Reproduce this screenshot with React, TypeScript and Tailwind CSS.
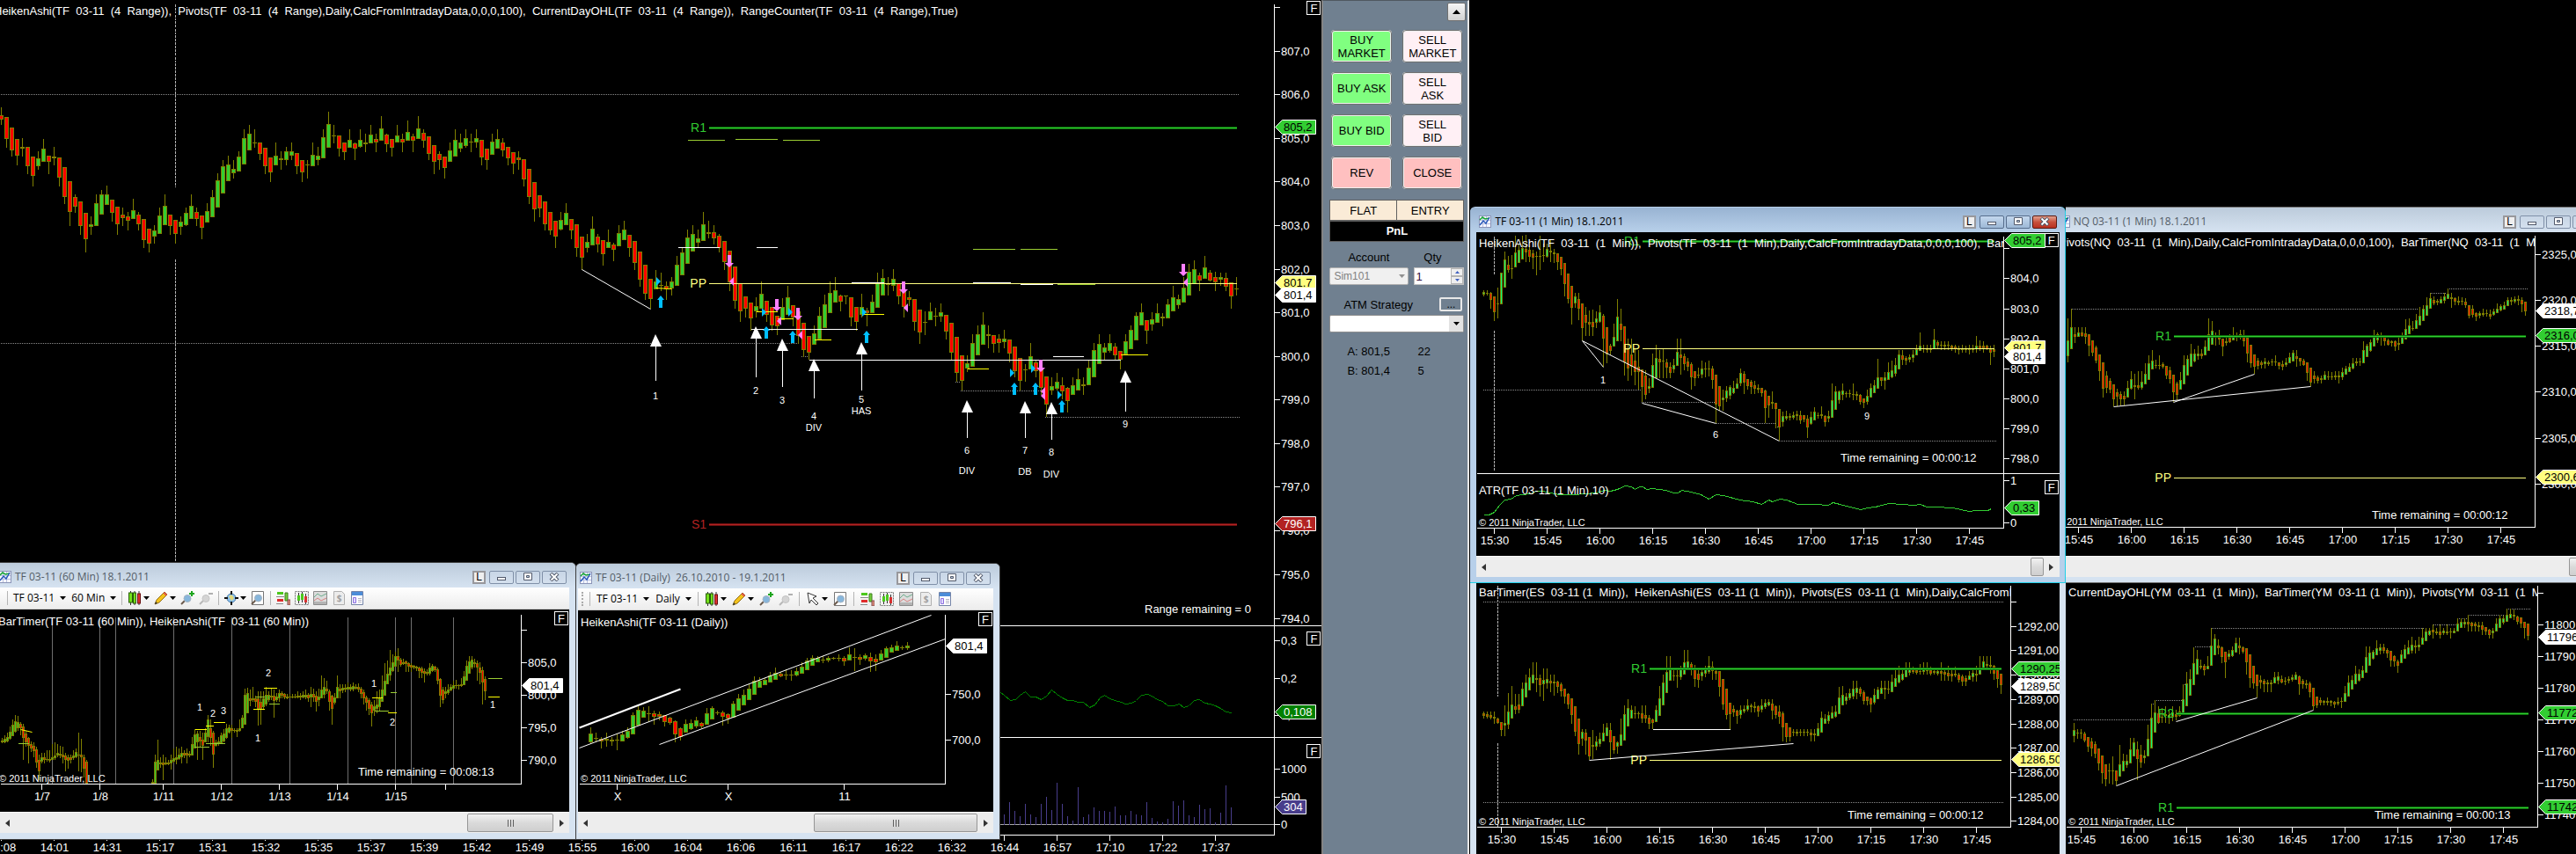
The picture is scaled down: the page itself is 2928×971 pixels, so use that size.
import type { ReactNode } from "react";

type Segment = [number, number, number, number];
type Tick = [number, string];
type Label = [number, number, string];

const OLIVE = "#808000";
const LIME = "#32cd32";
const SPRING = "#00ff7f";
const PIVOT = "#ffff80";

// Each bar: colour letter, then high, body top, body bottom, low.
const rangeBars = `r299,321,332,349 r326,326,386,411 r356,356,420,436 r388,388,433,461 d385,409,413,436 r410,410,462,485
r436,436,489,519 g421,441,462,473 g386,414,452,452 r434,434,450,485 g409,436,442,461 r439,439,496,519 r465,465,548,568
r505,505,591,630 r541,549,575,593 r561,561,629,654 r594,594,667,702 g603,625,631,654 g541,566,629,629 g529,541,599,599
g517,541,570,570 r557,557,594,617 r576,576,624,654 r578,598,607,630 r590,603,616,642 g554,586,609,609 r590,598,624,642
r610,610,668,691 r637,637,678,702 g627,642,658,679 g578,600,651,651 g541,573,626,626 r598,598,629,654 r613,613,651,679
g603,617,631,654 g578,593,627,629 g541,573,611,611 r578,590,611,630 r600,600,634,666 g566,588,619,619 g529,549,604,604
g483,502,577,577 g447,463,540,540 g434,459,504,504 g447,471,483,497 g421,436,477,477 g360,385,458,458 g348,373,420,420
d360,397,399,412 r398,398,428,447 r412,412,464,485 r439,439,479,507 g398,434,460,460 g421,441,447,473 g409,422,445,460
g398,422,433,447 r427,427,464,485 r446,446,479,507 d446,458,461,497 g398,431,462,462 g409,434,446,461 g360,382,440,440
g311,345,411,411 d348,377,379,400 r377,377,415,436 r397,397,423,447 g360,390,411,411 r397,399,415,447 g360,390,408,412
d372,397,401,423 g348,375,399,399 r372,387,396,423 g323,358,391,391 r372,376,401,423 r386,387,411,436 g348,377,398,398
r372,387,396,423 g336,367,393,393 r372,380,391,423 g323,358,386,386 r360,370,391,412 r380,380,428,447 r404,404,452,485
r421,429,446,473 r436,436,467,497 g398,419,452,452 g360,390,435,435 g372,397,413,424 g360,385,407,412 d372,395,398,423
g360,385,396,412 r390,390,438,461 r414,414,447,473 g372,394,431,431 g360,386,413,413 r385,397,420,436 r409,409,442,461
r424,424,456,485 r421,439,447,473 r443,443,499,519 r470,470,548,568 r507,507,582,617 r545,545,580,605 r561,561,624,642
r590,590,641,654 r615,615,658,691 g590,612,639,642 g566,593,627,627 r610,610,643,666 r625,625,692,715 r659,659,719,751
g651,674,690,702 g603,637,684,684 r652,659,680,702 r669,669,707,740 g639,674,690,690 r676,682,695,728 g627,649,687,687
g615,639,670,670 r655,655,692,715 r671,671,732,751 r701,701,778,799 r738,738,818,835 r777,777,832,860 g751,785,805,805
d759,794,797,810 r785,797,807,835 g772,784,803,822 g713,737,796,796 g689,703,767,767 g639,661,736,736 g627,652,700,700
g639,664,675,690 g590,625,671,671 d615,648,651,665 r627,647,665,680 r652,657,690,702 r671,671,730,751 r698,698,787,811
r742,742,837,860 r790,790,867,897 r826,826,859,884 r843,843,888,921 g827,853,867,884 g784,818,860,860 r838,838,876,897
r855,855,906,921 r880,880,908,933 g831,855,893,893 g796,828,877,877 r850,850,884,909 r868,868,936,958 r900,900,975,994
r937,937,983,1003 g906,929,960,960 g856,880,946,946 g821,848,913,913 g784,816,873,873 g772,808,843,843 r821,822,840,867
d822,823,826,848 r827,827,884,909 r856,856,896,921 g819,855,878,884 r858,866,873,909 g821,841,871,871 g760,787,857,857
g750,773,822,822 d772,792,795,822 g750,777,796,811 r790,790,825,848 r809,809,855,884 r811,827,836,853 r833,833,896,921
r862,862,925,958 d867,897,900,933 g843,868,893,893 d857,880,883,909 g846,870,881,897 r876,876,924,946 r899,899,982,1003
r938,938,1040,1064 r990,990,1062,1088 g990,1012,1026,1036 g931,955,1021,1021 g906,931,990,990 g869,904,960,960
r906,932,937,970 r933,934,957,982 r931,943,956,982 g919,943,953,970 r946,946,986,1010 r965,965,1033,1052
r997,997,1060,1088 d1015,1029,1032,1064 g955,993,1030,1030 r1003,1010,1033,1052 r1010,1029,1080,1100
r1049,1049,1127,1162 g1051,1076,1089,1101 g1039,1063,1082,1088 r1051,1073,1090,1113 r1079,1080,1117,1150
g1051,1073,1099,1099 g1027,1055,1088,1088 d1051,1071,1075,1101 g1003,1024,1073,1073 g955,976,1051,1051
g931,957,1014,1014 g955,967,983,1003 g931,955,977,982 r955,965,990,1003 r978,978,1002,1028 g931,951,988,988
g906,919,972,972 g869,880,948,948 g845,870,906,906 r892,892,921,958 g869,890,905,921 g845,872,899,899 d872,882,886,909
g833,848,886,886 g796,827,867,867 g821,833,849,860 g772,801,842,842 g736,757,822,822 g724,750,791,791 r760,768,782,811
g713,745,776,776 r752,759,781,785 r758,771,786,810 g760,772,779,797 r760,774,798,811 r786,786,825,860 d772,803,807,823`;

const tfBars = `g299,307,316,321 d299,308,309,318 r307,309,332,364 r321,321,374,404 d291,344,346,395 g240,240,347,347
g168,196,292,292 r184,213,231,240 d180,226,228,262 g115,170,223,223 g140,163,208,208 g115,155,196,196 r112,160,170,203
r150,163,187,205 r163,173,190,228 d168,183,187,250 d115,182,186,230 d140,180,184,205 g140,160,186,190 r130,164,172,205
r160,170,178,208 r173,175,203,230 r187,187,228,250 r207,207,278,322 r243,243,329,345 r285,285,360,417 g308,320,345,360
r309,330,362,403 r345,345,428,472 r356,384,411,456 r370,408,418,456 r367,408,427,456 g372,396,411,430 g352,376,408,410
r380,388,466,560 r427,427,520,548 r483,488,508,522 g415,458,493,493 g331,390,475,475 r363,413,434,475 r424,424,545,590
r466,500,566,608 r466,520,562,590 r500,540,580,625 r505,560,578,640 r571,571,630,682 r572,590,658,672 g600,626,636,650
g517,555,632,632 g486,530,600,600 r505,535,545,600 d500,540,543,600 r535,547,565,600 r547,561,581,600 g535,555,570,583
g466,510,558,558 r466,520,532,588 r515,525,553,572 r530,543,562,575 r545,553,598,640 r576,577,600,628 g563,588,592,600
g540,568,588,600 d545,566,569,598 d540,566,569,594 r557,568,605,635 r588,588,690,752 r628,628,696,712 g640,665,675,712
g628,643,670,682 g625,630,660,672 g610,633,650,655 g600,618,636,636 g567,583,618,628 r575,585,614,655 r604,604,626,640
r605,612,630,655 r610,624,637,655 g620,632,638,650 r634,634,652,662 r640,643,702,752 r660,660,692,735 r645,680,686,706
r683,683,706,770 r705,705,768,812 g715,728,750,766 g710,730,738,745 d720,730,736,745 g715,727,736,742 g710,724,730,745
r712,726,744,756 r725,725,740,750 r726,738,768,804 g715,733,756,760 g700,713,745,745 r716,726,730,738 r697,724,730,738
r725,730,750,766 g710,730,738,750 g618,675,734,734 g628,646,708,708 g643,645,676,686 g618,642,656,676 d645,650,652,665
d640,652,654,665 d618,653,655,675 g645,653,660,675 r655,658,680,690 r668,670,683,702 g640,660,680,690 g618,632,665,665
g605,625,652,652 g534,597,636,636 r597,597,610,628 g580,596,610,640 g545,578,606,606 g540,574,596,600 g530,555,584,594
g505,520,570,570 r505,523,536,556 r524,530,540,554 g520,528,538,545 g505,518,530,545 g486,502,522,522 g444,490,508,508
r486,497,502,514 d486,500,503,514 d486,500,503,512 g432,468,500,500 r470,478,490,500 r475,486,490,503 r473,485,492,503
d475,486,490,503 r486,490,498,508 r486,492,500,514 r490,498,504,518 d486,500,503,514 r490,500,505,514 g486,500,505,518
r486,498,503,514 g457,488,502,514 r470,490,500,508 r475,490,498,514 r486,490,500,505 r490,500,512,556 r486,502,510,527`;

const nqBars = `g397,470,524,545 g364,426,500,500 r426,449,458,480 g426,445,458,460 r426,445,455,458 r426,447,458,483
r450,450,490,524 r470,470,512,524 r490,495,540,548 r520,520,577,610 r545,545,635,665 r575,592,632,650 r600,610,638,650
r621,621,673,697 r635,648,662,695 r645,655,671,693 r645,659,671,693 g610,633,665,665 g576,604,635,638 d586,625,629,671
r575,624,634,640 g575,612,632,640 g550,586,622,622 g522,548,605,605 g504,540,570,570 d536,555,557,567 d522,555,557,570
r545,552,562,567 r558,558,590,603 r562,573,602,618 r588,588,647,680 r612,618,656,675 g580,606,640,640 g522,555,622,622
g522,535,590,590 g483,517,562,562 g500,517,542,545 g490,515,526,536 r500,515,524,534 g470,492,523,523 g397,449,508,508
g405,438,486,486 d445,458,461,488 r435,457,467,485 r466,466,493,524 g457,475,480,490 r450,462,478,480 g426,453,470,472
r445,453,458,475 g435,450,460,468 r435,455,475,493 r462,462,517,545 r487,487,550,565 r519,519,562,586 r530,540,557,570
r540,545,554,567 g530,542,552,567 g540,546,551,557 d535,543,546,557 d522,543,546,557 r545,547,558,570 r540,552,560,572
g530,545,556,562 g513,528,550,550 g504,513,543,543 r504,525,533,560 r530,530,542,557 r535,540,555,558 r546,546,583,610
r563,563,614,628 r575,590,602,617 r590,597,608,617 r590,600,605,617 g575,588,605,605 d575,594,597,605 d580,593,597,605
d575,592,597,605 r575,590,597,617 g565,580,597,605 g558,568,588,588 g550,560,580,580 g530,548,568,570 r530,543,550,558
g530,543,547,558 g475,504,548,548 g483,490,527,527 g467,476,508,510 g435,455,493,493 g445,450,470,480 r445,453,460,490
r460,460,475,490 r465,472,485,490 d470,475,479,493 r472,475,493,507 g457,480,487,505 g445,460,483,483 g400,432,468,468
g395,420,450,450 d405,428,431,437 g380,402,433,433 g358,387,420,420 g350,363,405,405 g323,352,387,387 g310,327,364,364
r320,332,345,350 r330,337,343,350 g320,330,345,345 g310,322,335,345 g294,313,330,330 r310,323,330,360 r325,328,340,352
r320,335,342,350 r325,335,340,350 r326,338,350,360 r350,350,388,397 r350,364,385,393 r375,378,390,405 g372,378,388,397
g362,377,383,390 d365,377,379,390 r365,380,390,400 g362,373,385,388 g345,362,377,377 g348,355,370,372 g340,352,365,365
g323,333,355,355 r323,333,338,352 g320,330,338,345 r318,330,337,350 r323,333,347,375 r340,340,372,388`;

const esBars = `r507,514,522,530 r507,517,524,530 r507,520,528,533 r507,524,532,548 r528,530,545,550 r542,542,570,590
g487,546,556,590 g445,507,552,568 g420,482,530,530 r447,488,500,515 r447,483,500,512 g408,430,488,488 g382,409,460,460
g360,390,436,436 g340,382,412,412 r340,393,399,440 r382,393,416,455 g360,400,414,470 g360,397,412,430 r382,402,410,440
g382,405,410,453 r402,405,422,445 r408,415,438,455 r430,430,456,480 r445,447,483,497 r463,463,518,550 r490,490,577,590
r532,532,617,653 g567,575,600,625 r567,580,605,653 r595,595,660,672 g570,620,626,670 g590,609,628,640 g580,600,618,628
g550,580,610,610 g547,560,590,590 r545,570,612,672 r590,592,640,650 g608,612,628,650 g532,585,623,623 g487,517,605,605
g465,495,558,558 g487,500,530,530 d490,512,514,530 d507,512,514,530 r487,513,530,545 r487,520,530,545 r520,528,548,568
r530,535,545,568 g487,500,542,542 g420,463,522,522 g382,408,485,485 g318,373,445,445 g318,362,402,402 d365,385,388,402
r363,385,388,425 g350,363,390,400 g298,340,380,380 g298,337,360,360 r340,345,362,385 r347,360,395,423 r362,378,398,425
g362,373,388,402 g350,362,378,390 g318,350,372,378 r337,355,370,400 r363,368,378,400 r370,370,424,455 r397,397,482,500
r430,430,518,533 r478,478,515,568 r487,497,510,525 r500,503,523,548 g487,502,518,530 g487,497,508,513 g465,485,502,508
r480,487,492,510 r475,488,495,510 r487,490,508,525 g465,487,500,510 g465,478,493,497 g465,473,487,490 r465,480,503,533
r487,490,520,530 r487,508,525,548 r507,512,562,608 r545,545,595,612 r562,562,595,610 d567,577,580,590 r567,577,582,590
d567,577,580,590 d567,577,580,590 d567,577,580,590 r567,580,588,610 d567,583,587,610 g545,563,590,590 g508,528,578,578
g517,530,548,550 g507,520,540,548 g490,510,530,530 g487,508,525,528 g423,460,515,515 g420,450,487,487 g445,455,470,483
g430,445,463,468 g403,430,455,465 g402,425,443,465 r423,430,447,455 r435,442,472,482 r455,455,470,485 r460,463,483,510
g430,450,478,482 g423,433,465,465 g402,427,447,447 g402,425,432,465 d402,428,432,447 g380,404,440,440 g365,393,422,422
g350,382,408,412 g362,377,398,402 g340,360,390,390 g338,362,375,385 r355,363,373,378 r362,365,375,382 r345,368,372,382
g340,360,373,382 r340,363,370,382 r355,365,378,385 r362,370,375,380 g362,370,378,385 r340,370,378,402 r362,372,382,402
r350,376,388,402 r362,377,388,405 r355,377,385,390 r375,380,398,408 r380,388,405,420 r385,393,405,420 g370,383,398,400
g362,375,390,405 g350,377,383,405 g318,358,382,382 g318,337,362,362 r318,345,352,365 r318,347,353,378 r347,350,378,400
r365,365,395,425 r378,378,418,447`;

const ymBars = `g545,570,590,612 d568,579,582,600 d568,580,583,600 r575,582,605,612 r595,595,626,645 r598,610,632,660
r610,617,650,665 r633,633,684,708 r657,657,718,753 r688,688,738,762 d685,708,711,753 d660,708,711,755 r708,708,745,760
g621,687,728,728 g650,675,710,710 g655,675,690,700 g598,636,684,684 g598,613,660,660 r610,636,670,740 r620,653,680,700
g640,657,667,685 g553,600,660,660 g480,528,632,632 g468,510,580,580 r490,513,545,548 d495,525,528,545 r490,515,522,545
r500,518,525,548 g490,510,525,540 r500,515,525,537 g490,508,522,525 g415,466,512,512 g373,411,490,490 g363,395,452,452
g287,342,416,416 g298,327,380,380 r330,350,358,362 r345,352,365,385 g318,350,362,362 g223,283,350,350 g243,258,316,316
r262,283,290,312 r285,287,320,342 r303,303,338,392 g298,308,320,330 g285,298,318,320 g256,272,307,307 r256,282,290,312
r285,287,302,310 r290,292,340,380 r312,312,392,425 r352,352,410,430 r380,380,420,460 r385,400,408,430 r395,403,415,440
r400,408,415,440 r400,408,415,440 g373,390,412,412 g373,388,403,415 r385,397,408,410 d390,403,406,418 g388,395,403,410
g380,390,400,405 g373,382,398,400 r385,387,415,450 r395,402,415,430 r400,410,418,430 r405,412,442,460 r427,427,490,502
r455,457,487,495 r460,468,478,485 r467,470,477,485 r460,472,477,485 r467,472,478,490 r470,475,482,495 r460,475,480,485
d460,471,474,495 g420,443,473,473 g385,408,455,455 g385,398,432,432 g350,378,415,415 g363,377,403,405 g350,365,392,392
g285,320,375,375 g285,307,350,350 g298,302,328,330 g265,290,315,315 g275,288,300,312 r275,288,300,310 r290,298,310,325
r300,300,333,355 r315,318,337,355 r330,335,352,375 g298,313,343,343 g280,293,328,328 g265,287,313,313 g253,280,300,310
r265,283,288,310 g253,278,288,300 g223,255,280,280 g223,233,267,267 g223,232,245,250 r210,228,238,258 r223,233,240,245
r210,233,245,258 g223,232,240,245 d210,235,240,245 r223,233,238,258 g223,230,240,240 g190,208,235,235 g190,202,222,222
g190,200,210,222 r178,200,210,235 r200,203,215,235 r200,208,215,235 r200,212,218,235 r200,213,228,245 r220,220,235,245
r225,228,245,258 g222,232,240,258 g190,208,235,235 g178,190,222,222 g180,188,205,210 g157,178,200,200 g157,173,190,190
r160,178,183,195 r180,183,200,210 r187,187,208,222 r200,200,222,258 r208,208,248,265`;

const hourBarsEarly = `g625,633,640,642 g615,628,638,642 g605,620,636,640 g585,603,628,630 g560,580,618,618 g545,568,603,605
g550,570,590,600 r570,575,590,615 r575,585,625,700 r600,610,640,655 r620,625,650,712 r635,645,660,672 r640,650,668,690
r655,662,708,725 r680,700,738,768 g675,690,705,710 r675,690,698,710 d665,695,699,705 r665,695,703,708 g645,690,700,700
g640,683,692,700 g645,675,685,690 r650,678,685,692 r655,682,690,710 r675,685,700,738 r680,690,702,730 r680,690,700,710
g665,685,692,700 g660,672,690,692 r605,680,685,738 r628,682,690,740 r680,690,730,760 r700,705,780,780`;

const hourBarsLate = `g765,775,780,780 g680,705,780,780 g630,700,735,735 r690,708,715,725 r680,708,718,768 r690,708,715,718
g700,708,715,718 g680,700,712,732 g660,692,705,708 g655,690,698,715 g660,680,695,698 g655,675,690,710 r665,675,685,692
r660,675,685,710 r670,678,685,690 g620,645,685,685 g595,612,660,660 g600,610,640,700 r600,620,635,655 r605,630,650,700
g590,605,640,640 g545,560,620,640 r560,590,625,650 r600,605,680,725 g630,640,650,655 g620,635,645,652 g605,615,642,645
g595,610,635,640 g575,590,625,628 g578,588,605,610 r580,590,600,625 d590,597,600,605 r590,596,602,620 g560,590,600,602
g545,555,592,592 g455,478,580,580 g452,470,540,540 r460,490,497,515 r450,488,495,500 r480,488,500,520 r465,490,525,582
r465,500,525,578 g465,490,520,525 g450,478,510,515 g465,478,495,500 r455,480,487,495 r460,480,498,555 g470,482,495,500
g460,472,490,500 r465,472,480,490 r470,475,487,493 r475,482,488,493 d475,482,486,490 d475,482,486,490 r475,482,487,490
g465,480,487,490 r470,480,487,495 g465,478,487,490 g460,478,485,492 r470,478,488,500 g450,475,487,520 r455,475,487,500
r465,480,500,535 g455,482,495,515 g410,460,490,490 g420,450,478,490 r430,455,465,475 r460,465,500,530 r478,480,525,578
g470,485,505,510 g410,450,490,490 r440,455,465,490 g440,452,462,470 g440,452,460,468 g435,450,458,460 g440,450,458,465
g435,448,458,465 r440,450,455,460 r438,450,460,468 r450,455,475,490 r460,468,490,510 r480,485,505,530 r490,495,525,545
r500,510,540,585 g495,515,530,550 g465,510,525,540 g460,490,520,530 g410,460,500,500 g370,430,480,480 g360,405,440,440
g325,385,410,430 g340,365,395,400 g330,345,380,380 r318,345,360,400 r350,358,375,380 r355,365,372,375 r360,363,372,400
r365,370,382,400 r370,375,385,400 r375,378,385,390 r378,382,388,395 r380,384,395,420 r380,388,402,420 r388,395,405,435
g390,398,405,410 g370,385,405,410 g372,378,395,400 r378,382,392,400 r385,390,430,440 r420,422,480,520 r450,460,495,508
g450,465,475,490 g440,458,470,478 g440,450,462,465 g430,445,455,460 r425,443,448,455 r440,445,448,460 g420,442,448,450
g395,415,445,445 g360,378,430,430 g345,362,405,405 g345,358,385,390 r355,365,372,385 r360,370,385,430 r365,385,402,440
r380,392,435,510 r415,422,465,495`;

const dailyBars = `g587,609,638,642 d605,623,626,640 r620,627,637,660 r605,627,632,653 r620,629,637,650 d608,631,634,665
g600,611,635,635 g588,600,623,628 g536,546,611,611 g516,528,583,583 g520,530,554,554 d516,539,542,570 r530,541,551,578
r535,544,551,565 r545,546,570,585 r552,556,573,580 r564,566,613,640 r588,590,621,632 g561,575,605,605 g560,572,593,598
g551,564,585,590 r570,573,584,590 g521,541,578,578 g516,521,560,560 d532,538,541,545 r531,538,552,581 r540,543,558,575
g498,507,554,554 g475,488,530,530 g458,477,512,512 g440,457,494,494 g415,429,476,476 g417,429,452,452 g420,427,444,444
g400,412,434,434 g385,402,425,425 r400,406,413,418 d390,409,412,425 d392,408,411,428 g385,396,411,415 g367,381,404,404
g350,361,392,392 g342,350,377,377 g345,350,365,367 d345,356,359,370 g345,351,360,365 d349,351,355,358 d340,351,355,362
r345,351,362,377 g315,339,359,359 d318,349,352,397 r338,349,356,375 g336,343,353,360 r332,348,362,398 r340,353,366,395
g325,336,359,359 g311,318,350,350 g305,316,334,334 g294,308,326,328 r308,315,319,323 g297,309,318,323`;

function Candles({ bars, x, step, base, unit = 3, body = 3, up = SPRING }: {
  bars: string; x: number; step: number; base: number; unit?: number; body?: number; up?: string;
}) {
  const half = (body - 1) / 2;
  return (
    <g shapeRendering="crispEdges">
      {bars.split(/\s+/).map((bar, i) => {
        const [high, top, bottom, low] = bar.slice(1).split(",").map((v) => Math.round(base + Number(v) / unit));
        const cx = x + i * step;
        const height = Math.max(bottom - top, 1);
        return (
          <g key={i}>
            <rect x={cx} y={high} width={1} height={Math.max(low - high, 1)} fill={OLIVE} />
            <rect x={cx - half} y={top} width={body} height={height} fill={OLIVE} />
            {height > 2 && bar[0] !== "d" && (
              <rect x={cx - half + 1} y={top + 1} width={body - 2} height={height - 2} fill={bar[0] === "g" ? up : "#ff0000"} />
            )}
          </g>
        );
      })}
    </g>
  );
}

function Lines({ items, color = "#ffffff", width = 1, dash }: {
  items: Segment[]; color?: string; width?: number; dash?: string;
}) {
  return (
    <g stroke={color} strokeWidth={width} strokeDasharray={dash} transform="translate(0.5 0.5)">
      {items.map(([x1, y1, x2, y2], i) => (
        <line key={i} x1={x1} y1={y1} x2={x2} y2={y2} shapeRendering={x1 === x2 || y1 === y2 ? "crispEdges" : "auto"} />
      ))}
    </g>
  );
}

function Curve({ points, color }: { points: string; color: string }) {
  return <polyline points={points} fill="none" stroke={color} transform="translate(0.5 0.5)" shapeRendering="crispEdges" />;
}

function Dotted({ items }: { items: Segment[] }) {
  return <Lines items={items} color="#8c8c8c" dash="1 1" />;
}

function Labels({ items, size = 11, anchor = "middle" }: { items: Label[]; size?: number; anchor?: "start" | "middle" }) {
  return (
    <g fill="#ffffff" fontSize={size} textAnchor={anchor}>
      {items.map(([x, y, text], i) => <text key={i} x={x} y={y}>{text}</text>)}
    </g>
  );
}

// A pivot level: its name on the left of a horizontal line.
function Pivot({ name, x1, x2, y, color, thick }: { name: string; x1: number; x2: number; y: number; color: string; thick?: boolean }) {
  return (
    <>
      {thick && <Lines items={[[x1, y, x2, y]]} color={color === LIME ? "#0b6b0b" : "#6b1010"} width={3} />}
      <Lines items={[[x1, y, x2, y]]} color={color} />
      <text x={x1 - 2} y={y + 5} textAnchor="end" fontSize={14} fill={color}>{name}</text>
    </>
  );
}

function PriceTag({ x, y, width = 46, fill, ink = "#000000", text }: {
  x: number; y: number; width?: number; fill: string; ink?: string; text: string;
}) {
  return (
    <g>
      <path d={`M${x} ${y + 8}L${x + 8} ${y}H${x + width}V${y + 16}H${x + 8}Z`} fill={fill} stroke="#ffffff" transform="translate(0.5 0.5)" />
      <text x={x + 10} y={y + 13} fontSize={13} fill={ink}>{text}</text>
    </g>
  );
}

function PriceAxis({ x, top, bottom, ticks }: { x: number; top: number; bottom: number; ticks: Tick[] }) {
  return (
    <>
      <Lines items={[[x, top, x, bottom], ...ticks.map(([y]): Segment => [x, y, x + 6, y])]} />
      <Labels items={ticks.map(([y, text]): Label => [x + 8, y + 5, text])} size={13} anchor="start" />
    </>
  );
}

function TimeAxis({ x1, x2, y, ticks }: { x1: number; x2: number; y: number; ticks: Tick[] }) {
  return (
    <>
      <Lines items={[[x1, y, x2, y], ...ticks.map(([x]): Segment => [x, y, x, y + 6])]} />
      <Labels items={ticks.map(([x, text]): Label => [x + 1, y + 19, text])} size={13} />
    </>
  );
}

function times(start: number, labels: string): Tick[] {
  return labels.split(" ").map((text, i): Tick => [start + i * 60, text]);
}

// Chart title, cut off where the price axis begins.
function Heading({ x, y, until, text }: { x: number; y: number; until: number; text: string }) {
  return (
    <svg x={x} y={y - 14} width={until - x} height={20}>
      <text x={0} y={14} fontSize={13} fill="#ffffff" className="whitespace-pre">{text}</text>
    </svg>
  );
}

function Chart({ origin, height, label, children, fixed }: {
  origin: [number, number]; height: string; label: string; children: ReactNode; fixed?: ReactNode;
}) {
  return (
    <div className="relative bg-black">
      <svg role="img" aria-label={label} className={`block w-full ${height}`} fontFamily="'Liberation Sans', Arial, sans-serif">
        <g transform={`translate(${-origin[0]} ${-origin[1]})`}>{children}</g>
      </svg>
      {fixed}
    </div>
  );
}

function FixButton({ place }: { place: string }) {
  return (
    <button aria-label="Fixed scale" className={`absolute flex h-4 w-4 items-center justify-center border border-white bg-black text-[13px] leading-none text-white ${place}`}>
      F
    </button>
  );
}

function ChartIcon() {
  return (
    <svg width="14" height="14" viewBox="0 0 14 14" className="shrink-0">
      <rect x="0.5" y="0.5" width="13" height="13" fill="#f4f6ff" stroke="#8b95b8" />
      <path d="M4.500 1v12M8.500 1v12M1 5.500h12M1 9.500h12" stroke="#b9c1e0" />
      <path d="M1 5l3-3 3 2 5-1" fill="none" stroke="#17a534" strokeWidth="1.6" />
      <path d="M1 11l4-5 3 3 4-7" fill="none" stroke="#2456b8" strokeWidth="1.4" />
    </svg>
  );
}

function CaptionButton({ label, active, close, children }: { label: string; active?: boolean; close?: boolean; children: ReactNode }) {
  const tone = active && close
    ? "border-[#5a1a12] bg-gradient-to-b from-[#e0a090] via-[#c8503c] to-[#b83020]"
    : active
      ? "border-[#566d8c] bg-gradient-to-b from-[#c4d8ee] to-[#9db8d6]"
      : "border-[#8090a8] bg-gradient-to-b from-[#c8d6e6] to-[#d4e0ee]";
  return (
    <button aria-label={label} className={`flex h-[15px] w-7 items-center justify-center rounded-xs border ${tone}`}>
      <svg width="12" height="10" viewBox="0 0 12 10">{children}</svg>
    </button>
  );
}

function TitleBar({ title, active, pad }: { title: string; active?: boolean; pad: string }) {
  const tone = active ? "from-[#98b3d2] to-[#b8d0ea] text-black" : "from-[#bccbdb] to-[#d6e3f1] text-[#535c66]";
  return (
    <div className={`flex h-7 items-center bg-gradient-to-b pt-1 ${tone} ${pad}`}>
      <ChartIcon />
      <span className="ml-1 whitespace-pre text-[12px] leading-4 font-['Open_Sans','Noto_Sans',sans-serif]">{title}</span>
      <div className="ml-auto flex items-center gap-0.5">
        <button aria-label="Link" className="mr-0.5 flex h-[15px] w-[15px] items-center justify-center border-2 border-[#98989c] bg-[#efefef] text-[12px] leading-none text-black">L</button>
        <CaptionButton label="Minimize" active={active}>
          <rect x="1.5" y="5.5" width="9" height="3" fill="#fff" stroke="#50586a" />
        </CaptionButton>
        <CaptionButton label="Restore" active={active}>
          <path d="M1.500 0.500h9v8h-9z" fill="#fff" stroke="#50586a" />
          <path d="M4.500 3.500h3v2h-3z" fill="#b8c8dc" stroke="#50586a" />
        </CaptionButton>
        <CaptionButton label="Close" active={active} close>
          <path d="M2 1l8 8M10 1L2 9" stroke="#50586a" strokeWidth="4" />
          <path d="M2.500 1.500l7 7M9.500 1.500l-7 7" stroke="#fff" strokeWidth="2" />
        </CaptionButton>
      </div>
    </div>
  );
}

function ScrollBar({ thumb, grip = true }: { thumb: string; grip?: boolean }) {
  return (
    <div className="flex h-6 items-center border-t border-white bg-[#ededed]">
      <button aria-label="Scroll left" className="flex h-full w-4 items-center justify-center">
        <svg width="5" height="8" viewBox="0 0 5 8"><path d="M5 0v8L0 4z" fill="#333" /></svg>
      </button>
      <div className={`ml-auto flex h-[21px] items-center justify-center rounded-xs border border-[#969696] bg-gradient-to-b from-[#f2f2f2] via-[#dadada] to-[#cfcfcf] ${thumb}`}>
        {grip && <svg width="7" height="8" viewBox="0 0 7 8"><path d="M.5 0v8M3.500 0v8M6.500 0v8" stroke="#606060" /></svg>}
      </div>
      <button aria-label="Scroll right" className="flex h-full w-[18px] items-center justify-center">
        <svg width="5" height="8" viewBox="0 0 5 8"><path d="M0 0v8l5-4z" fill="#333" /></svg>
      </button>
    </div>
  );
}

function Caret() {
  return <svg width="7" height="4" viewBox="0 0 7 4" className="shrink-0"><path d="M0 0h7L3.500 4z" fill="#000" /></svg>;
}

function Separator() {
  return <span className="mx-px h-4 w-px shrink-0 bg-[#b4b4b4]" />;
}

function ToolIcon({ label, children, caret }: { label: string; children: ReactNode; caret?: boolean }) {
  return (
    <button aria-label={label} className="flex shrink-0 items-center gap-0.5">
      <svg width="16" height="16" viewBox="0 0 16 16">{children}</svg>
      {caret && <Caret />}
    </button>
  );
}

function Magnifier({ faded }: { faded?: boolean }) {
  return (
    <>
      <path d="M6 10l-5 5" stroke={faded ? "#b8b8b8" : "#6b5a4c"} strokeWidth="2" />
      <circle cx="8" cy="8.500" r="4" fill={faded ? "#d4d4d4" : "#86b6dc"} stroke={faded ? "#c4c4c4" : "#a6b4c2"} />
    </>
  );
}

function Toolbar({ period, pointer, pad }: { period: string; pointer?: boolean; pad: string }) {
  return (
    <div className={`flex h-[25px] items-center border-b border-[#d0d0d0] bg-gradient-to-b from-white to-[#ececec] text-[12px] text-black font-['Open_Sans','Noto_Sans',sans-serif] ${pad}`}>
      {pointer && <span className="h-4 w-0 border-l-2 border-dotted border-[#aaa]" />}
      <Separator />
      <button className="flex items-center gap-1.5 whitespace-nowrap">TF 03-11 <Caret /></button>
      <button className="ml-px flex items-center gap-1.5 whitespace-nowrap">{period} <Caret /></button>
      <Separator />
      <ToolIcon label="Chart style" caret>
        <path d="M3.500 0v16M8 0v16M13 0v16" stroke="#333" />
        <rect x="1.500" y="2" width="4" height="11" fill="#74e01c" stroke="#2a5c0c" />
        <rect x="6.500" y="2" width="3" height="12" fill="#74e01c" stroke="#2a5c0c" />
        <rect x="11.500" y="3" width="3" height="11" fill="#e03030" stroke="#6c1010" />
      </ToolIcon>
      <ToolIcon label="Draw" caret>
        <path d="M1 15l2-5L12 1l3 3-9 9z" fill="#f3c21c" stroke="#94701a" />
        <path d="M12 1l3 3-1.500 1.500-3-3z" fill="#e0574c" />
        <path d="M1 15l1-3 2 2z" fill="#333" />
      </ToolIcon>
      <ToolIcon label="Zoom in">
        <Magnifier />
        <path d="M13 0v6M10 3h6" stroke="#1ea51e" strokeWidth="2" />
      </ToolIcon>
      <ToolIcon label="Zoom out">
        <Magnifier faded />
        <path d="M11 3h5" stroke="#b0b0b0" strokeWidth="2" />
      </ToolIcon>
      <Separator />
      {pointer ? (
        <ToolIcon label="Cursor" caret>
          <path d="M2 1l10 4-4 2 6 6-2 2-6-6-2 4z" fill="#fff" stroke="#333" />
        </ToolIcon>
      ) : (
        <ToolIcon label="Crosshair" caret>
          <circle cx="8" cy="8" r="5" fill="#8cc0ec" stroke="#4c7ca8" />
          <path d="M5 6q3-3 5 0t-2 5z" fill="#e2d878" />
          <path d="M8 0v4M8 12v4M0 8h4M12 8h4" stroke="#111" strokeWidth="2" />
        </ToolIcon>
      )}
      <ToolIcon label="Data box">
        <path d="M1.500 0.500h13v15h-13z" fill="#fff" stroke="#777" />
        <path d="M6 10l-5 5" stroke="#6b5a4c" strokeWidth="2" />
        <circle cx="8.500" cy="8" r="4" fill="#86b6dc" stroke="#a6b4c2" />
      </ToolIcon>
      <Separator />
      <ToolIcon label="Chart trader">
        <path d="M1 1h7v3H1z" fill="#4cc81c" />
        <path d="M1 9h7v3H1z" fill="#e02c2c" />
        <path d="M0 6.500h9M0 14.500h8" stroke="#888" />
        <path d="M10 2h3v9h-3z" fill="#74d03c" stroke="#3c7c1c" />
        <path d="M13 10h3v6h-3z" fill="#e08c7c" stroke="#7c4c4c" />
      </ToolIcon>
      <ToolIcon label="Data series">
        <path d="M.5.5h15v15H.5z" fill="#f0f0f0" stroke="#777" strokeDasharray="2 1" />
        <path d="M4.500 2v12M8.500 1v12M12.500 3v12" stroke="#333" />
        <path d="M3 5h3v6H3zM7 3h3v7H7z" fill="#4cc81c" />
        <path d="M11 6h3v7h-3z" fill="#d83030" />
      </ToolIcon>
      <ToolIcon label="Indicators">
        <path d="M.5.5h15v15H.5z" fill="#dcdcdc" stroke="#8c8c8c" />
        <path d="M1 7l4-4 4 3 6-3" fill="none" stroke="#6cae8c" />
        <path d="M1 11l4-3 4 3 6-3" fill="none" stroke="#d88080" />
        <path d="M1 12h14v3H1z" fill="#b4b4b4" />
      </ToolIcon>
      <ToolIcon label="Strategies">
        <path d="M2.500 0.500h9l3 3v12h-12z" fill="#ececec" stroke="#b0b0b0" />
        <text x="8.500" y="12" fontSize="10" fontWeight="bold" textAnchor="middle" fill="#a0a0a0">$</text>
      </ToolIcon>
      <ToolIcon label="Properties">
        <path d="M1.500 0.500h13v15h-13z" fill="#fff" stroke="#7484a8" />
        <path d="M2 1h12v4H2z" fill="#4c8cd8" />
        <path d="M3.500 7.500h3v6h-3z" fill="#e0d8fc" stroke="#8c70e0" />
        <path d="M9 8.500h4M9 10.500h4M9 12.500h4" stroke="#b4b4c4" />
      </ToolIcon>
    </div>
  );
}

// [x, tip, tail] of each numbered white arrow on the range chart
const entryArrows = [
  [745, 380, 433], [859, 371, 429], [889, 385, 440], [925, 408, 453], [979, 389, 444],
  [1099, 455, 498], [1165, 456, 498], [1195, 457, 500], [1279, 421, 468],
];
const buyArrows = [[751, 336], [871, 371], [901, 376], [985, 376], [1153, 435], [1177, 435], [1207, 455]];
const buyMarks = [[748, 320], [868, 355], [898, 355], [982, 355], [1150, 424], [1174, 419], [1204, 449]];
const sellArrows = [[829, 290], [883, 340], [907, 350], [1027, 320], [1183, 409], [1345, 300]];
const sellMarks = [[832, 320], [886, 365], [910, 381], [1030, 350], [1186, 445], [1186, 450], [1348, 321]];

const atrRange = "1137,787 1141,790 1148,796 1154,795 1159,790 1165,786 1171,792 1177,792 1183,795 1189,791 1195,784 1201,789 1207,793 1213,796 1219,796 1225,798 1231,798 1238,804 1244,801 1250,793 1255,790 1261,794 1267,796 1274,798 1279,800 1286,799 1291,796 1297,790 1304,789 1309,791 1315,795 1321,797 1327,802 1334,802 1340,800 1345,804 1351,802 1357,796 1363,795 1369,799 1375,800 1381,802 1387,805 1393,809 1400,810";
const volumes = [12, 26, 16, 10, 24, 12, 9, 24, 32, 17, 48, 24, 10, 5, 43, 9, 12, 20, 16, 16, 15, 21, 11, 11, 16, 12, 11, 26, 8, 4, 3, 7, 27, 22, 28, 11, 9, 23, 18, 19, 3, 14, 45, 20];

function RangeChart() {
  return (
    <Chart
      origin={[0, 0]}
      height="h-[971px]"
      label="TF 03-11 range chart"
      fixed={
        <>
          <FixButton place="top-px right-px" />
          <FixButton place="top-[718px] right-px" />
          <FixButton place="top-[846px] right-px" />
        </>
      }
    >
      <Lines items={[[199, 4, 199, 213], [199, 294, 199, 640]]} color="#b4b4b4" dash="3 1" />
      <Dotted items={[[0, 107, 1408, 107], [0, 390, 907, 390], [910, 405, 919, 405], [1085, 434, 1090, 434], [1091, 444, 1183, 444], [1187, 474, 1408, 474]]} />
      <Candles bars={rangeBars} x={1} step={6} base={0} unit={2.45} body={5} up={LIME} />
      <Pivot name="R1" x1={805} x2={1405} y={145} color={LIME} thick />
      <Pivot name="PP" x1={805} x2={1405} y={322} color={PIVOT} />
      <Pivot name="S1" x1={805} x2={1405} y={596} color="#b22222" thick />
      <Lines color="#9acd32" items={[[781, 159, 823, 159], [835, 158, 883, 158], [889, 159, 931, 159], [1105, 283, 1153, 283], [1159, 283, 1201, 283], [1201, 323, 1244, 323]]} />
      <Lines color="#ffff00" items={[[745, 327, 763, 328], [859, 354, 883, 354], [883, 362, 901, 362], [925, 386, 944, 386], [979, 357, 1004, 357], [1099, 419, 1123, 419], [1273, 403, 1304, 403]]} />
      <Lines items={[[770, 281, 817, 281], [859, 281, 883, 281], [853, 374, 974, 374], [967, 321, 1004, 321], [1105, 321, 1148, 321], [1159, 323, 1196, 323], [1196, 405, 1231, 405], [919, 409, 1273, 409], [661, 306, 739, 351]]} />
      {entryArrows.map(([x, tip, tail]) => (
        <g key={x} fill="#ffffff">
          <path d={`M${x} ${tip}l7 14h-13z`} />
          <rect x={x} y={tip + 14} width={1} height={tail - tip - 14} />
        </g>
      ))}
      <g fill="#00bfff">
        {buyArrows.map(([x, y]) => <path key={x} d={`M${x} ${y}l4 5h-2v9h-4v-9h-2z`} />)}
        {buyMarks.map(([x, y]) => <path key={x} d={`M${x - 2} ${y - 5}l5 5-5 5z`} />)}
      </g>
      <g fill="#ff80ff">
        {sellArrows.map(([x, y]) => <path key={x} d={`M${x} ${y + 14}l-5-5h3v-9h4v9h3z`} />)}
        {sellMarks.map(([x, y], i) => <path key={i} d={`M${x + 2} ${y - 5}l-5 5 5 5z`} />)}
      </g>
      <Labels
        items={[[745, 454, "1"], [859, 448, "2"], [889, 459, "3"], [925, 477, "4"], [925, 490, "DIV"], [979, 458, "5"], [979, 471, "HAS"], [1099, 516, "6"], [1099, 539, "DIV"], [1165, 516, "7"], [1165, 540, "DB"], [1195, 518, "8"], [1195, 543, "DIV"], [1279, 486, "9"]]}
      />
      <Heading x={-7} y={17} until={1448} text="HeikenAshi(TF  03-11  (4  Range)),  Pivots(TF  03-11  (4  Range),Daily,CalcFromIntradayData,0,0,0,100),  CurrentDayOHL(TF  03-11  (4  Range)),  RangeCounter(TF  03-11  (4  Range),True)" />
      <Labels items={[[1301, 697, "Range remaining = 0"]]} size={13} anchor="start" />
      <Lines items={[[1130, 711, 1503, 711], [1130, 838, 1503, 838]]} />
      <Lines items={[[1130, 937, 1448, 937]]} color="#a8a8a8" />
      <Curve points={atrRange} color="#008000" />
      <Lines color="#483d8b" items={volumes.map((v, i): Segment => [1141 + i * 6, 937 - v, 1141 + i * 6, 937])} />
      <PriceAxis
        x={1448}
        top={4}
        bottom={949}
        ticks={[[8, ""], [58, "807,0"], [107, "806,0"], [157, "805,0"], [206, "804,0"], [256, "803,0"], [306, "802,0"], [355, "801,0"], [405, "800,0"], [454, "799,0"], [504, "798,0"], [553, "797,0"], [603, "796,0"], [653, "795,0"], [703, "794,0"], [728, "0,3"], [771, "0,2"], [813, "0,1"], [874, "1000"], [906, "500"], [937, "0"]]}
      />
      <PriceTag x={1449} y={136} fill={LIME} text="805,2" />
      <PriceTag x={1449} y={313} fill={PIVOT} text="801.7" />
      <PriceTag x={1449} y={327} fill="#ffffff" text="801,4" />
      <PriceTag x={1449} y={587} fill="#b22222" ink="#ffffff" text="796,1" />
      <PriceTag x={1449} y={801} fill="#008000" ink="#ffffff" text="0,108" />
      <PriceTag x={1449} y={909} width={35} fill="#483d8b" ink="#ffffff" text="304" />
      <TimeAxis x1={0} x2={1448} y={949} ticks={times(1, "14:08 14:01 14:31 15:17 15:31 15:32 15:35 15:37 15:39 15:42 15:49 15:55 16:00 16:04 16:06 16:11 16:17 16:22 16:32 16:44 16:57 17:10 17:22 17:37")} />
    </Chart>
  );
}

function HourWindow() {
  return (
    <section aria-label="TF 03-11 (60 Min)" className="absolute top-[639px] left-[-8px] w-[663px] overflow-hidden rounded-tr-md border border-[#3c3c3c] bg-[#d6e3f1]">
      <TitleBar title="TF 03-11 (60 Min) 18.1.2011" pad="pl-1.5 pr-2.5" />
      <div className="mr-[7px] mb-[7px] ml-[7px]">
        <Toolbar period="60 Min" pad="gap-[5px] pl-[7px]" />
        <Chart origin={[0, 692]} height="h-[230px]" label="TF 03-11 60 minute chart" fixed={<FixButton place="top-[2px] right-px" />}>
          <Lines color="#6e6e6e" items={[59, 113, 131, 197, 263, 329, 395, 449, 467, 515].map((x): Segment => [x, 700, x, 890])} />
          <Candles bars={hourBarsEarly} x={2} step={3} base={630} up={LIME} />
          <Candles bars={hourBarsLate} x={173} step={3} base={630} up={LIME} />
          <Lines color="#ffff00" items={[[23, 828, 36, 831], [221, 828, 234, 828], [233, 824, 242, 824], [242, 820, 255, 820], [287, 805, 300, 805], [299, 781, 314, 781], [422, 792, 434, 792], [440, 809, 450, 809], [554, 791, 567, 791]]} />
          <Lines color="#9acd32" items={[[20, 844, 32, 844], [221, 848, 237, 848], [233, 844, 255, 844], [290, 791, 300, 791], [305, 799, 317, 799], [425, 807, 441, 807], [443, 786, 450, 786], [554, 770, 570, 770]]} />
          <Labels items={[[227, 807, "1"], [242, 814, "2"], [254, 811, "3"], [293, 842, "1"], [305, 768, "2"], [425, 780, "1"], [446, 824, "2"], [560, 804, "1"]]} />
          <Heading x={-2} y={710} until={592} text="BarTimer(TF 03-11 (60 Min)), HeikenAshi(TF  03-11 (60 Min))" />
          <Labels items={[[407, 881, "Time remaining = 00:08:13"]]} size={13} anchor="start" />
          <Labels items={[[-1, 888, "© 2011 NinjaTrader, LLC"]]} anchor="start" />
          <PriceAxis x={592} top={697} bottom={890} ticks={[[715, ""], [752, "805,0"], [789, "800,0"], [826, "795,0"], [863, "790,0"]]} />
          <PriceTag x={593} y={770} fill="#ffffff" text="801,4" />
          <TimeAxis x1={0} x2={592} y={890} ticks={[[47, "1/7"], [113, "1/8"], [185, "1/11"], [251, "1/12"], [317, "1/13"], [383, "1/14"], [449, "1/15"], [506, ""]]} />
        </Chart>
        <ScrollBar thumb="w-[98px]" />
      </div>
    </section>
  );
}

function DailyWindow() {
  return (
    <section aria-label="TF 03-11 (Daily)" className="absolute top-[640px] left-[654px] w-[483px] overflow-hidden rounded-t-md border border-[#3c3c3c] bg-[#d6e3f1]">
      <TitleBar title="TF 03-11 (Daily)  26.10.2010 - 19.1.2011" pad="pl-1 pr-2.5" />
      <div className="mr-[7px] mb-[7px] ml-0.5">
        <Toolbar period="Daily" pointer pad="gap-1.5 pl-1" />
        <Chart origin={[657, 693]} height="h-[229px]" label="TF 03-11 daily chart" fixed={<FixButton place="top-[2px] right-px" />}>
          <Candles bars={dailyBars} x={671} step={6} base={630} body={5} up={LIME} />
          <Lines items={[[658, 826, 773, 782]]} width={2} />
          <Lines items={[[658, 849, 1058, 698], [749, 845, 1074, 725]]} />
          <Heading x={660} y={711} until={1074} text="HeikenAshi(TF 03-11 (Daily))" />
          <Labels items={[[660, 888, "© 2011 NinjaTrader, LLC"]]} anchor="start" />
          <PriceAxis x={1074} top={697} bottom={890} ticks={[[788, "750,0"], [840, "700,0"]]} />
          <PriceTag x={1075} y={725} fill="#ffffff" text="801,4" />
          <TimeAxis x1={658} x2={1074} y={890} ticks={[[701, "X"], [827, "X"], [959, "11"]]} />
        </Chart>
        <ScrollBar thumb="w-[186px]" />
      </div>
    </section>
  );
}

const orderButtons = [
  ["BUY MARKET", "bg-[#80ff80]"], ["SELL MARKET", "bg-[#fff0f5]"],
  ["BUY ASK", "bg-[#80ff80]"], ["SELL ASK", "bg-[#fff0f5]"],
  ["BUY BID", "bg-[#80ff80]"], ["SELL BID", "bg-[#fff0f5]"],
  ["REV", "bg-[#ffc0c0]"], ["CLOSE", "bg-[#ffc0c0]"],
];

function OrderPanel() {
  return (
    <aside className="flex w-[168px] shrink-0 flex-col border-t border-r-2 border-l-2 border-t-[#505860] border-r-[#e8e8e8] border-l-[#848484] bg-[#708090] text-[13px] leading-[15px] text-black">
      <button aria-label="Collapse" className="mt-[2px] mr-0.5 flex h-[21px] w-[21px] items-center justify-center self-end rounded-xs border border-[#707070] bg-gradient-to-b from-[#f6f6f6] to-[#d2d2d2]">
        <svg width="9" height="5" viewBox="0 0 9 5"><path d="M0 5h9L4.500 0z" fill="#000" /></svg>
      </button>
      <div className="mt-2.5 grid grid-cols-2 gap-x-3 gap-y-[11px] pr-1.5 pl-[9px]">
        {orderButtons.map(([text, fill]) => (
          <button key={text} className={`flex h-[37px] items-center justify-center rounded-sm border-2 border-[#f0f0f0] px-px leading-[15px] outline outline-[#707070] -outline-offset-1 ${fill}`}>
            <span className={text.startsWith("SELL") ? "w-[54px]" : ""}>{text}</span>
          </button>
        ))}
      </div>
      <div className="mt-3 mr-1 ml-[7px]">
        <div className="grid h-6 grid-cols-2 border border-[#606060] bg-[#faebd7] text-center leading-[23px]">
          <span className="border-r border-[#606060]">FLAT</span>
          <span>ENTRY</span>
        </div>
        <div className="h-6 border border-[#606060] bg-black text-center leading-[22px] font-bold text-white">PnL</div>
        <div className="mt-2.5 flex text-center">
          <label htmlFor="account" className="w-[89px]">Account</label>
          <label htmlFor="qty" className="grow pr-2">Qty</label>
        </div>
        <div className="mt-1 flex gap-1.5">
          <div className="relative w-[90px] shrink-0">
            <select id="account" disabled defaultValue="Sim101" className="block h-5 w-full appearance-none rounded-xs border border-[#b0b0b0] bg-[#f0f0f0] pl-1 text-[12px] leading-[18px] text-[#808080] opacity-100">
              <option>Sim101</option>
            </select>
            <svg width="7" height="4" viewBox="0 0 7 4" className="absolute top-2 right-1"><path d="M0 0h7L3.500 4z" fill="#909090" /></svg>
          </div>
          <div className="flex h-5 min-w-0 grow border border-[#c0c0c0] bg-white">
            <input id="qty" defaultValue="1" className="min-w-0 grow pl-px text-[13px] leading-none text-[#301040] outline-none" />
            <div className="flex w-[14px] shrink-0 flex-col">
              <button aria-label="Increase" className="flex h-[9px] items-center justify-center border border-[#b4b4b4] bg-[#efefef]">
                <svg width="5" height="3" viewBox="0 0 5 3"><path d="M0 3h5L2.500 0z" fill="#4060c0" /></svg>
              </button>
              <button aria-label="Decrease" className="flex h-[9px] items-center justify-center border border-[#b4b4b4] bg-[#efefef]">
                <svg width="5" height="3" viewBox="0 0 5 3"><path d="M0 0h5L2.500 3z" fill="#4060c0" /></svg>
              </button>
            </div>
          </div>
        </div>
        <div className="mt-3.5 flex items-center pl-4">
          <label htmlFor="atm">ATM Strategy</label>
          <button className="mr-0.5 ml-auto h-4 w-[26px] rounded-xs border-2 border-[#e8e8e8] text-[12px] leading-[10px]">...</button>
        </div>
        <div className="relative mt-1">
          <select id="atm" className="block h-5 w-full appearance-none rounded-xs border border-[#909090] bg-white">
            <option> </option>
          </select>
          <span className="pointer-events-none absolute top-px right-px flex h-[18px] w-4 items-center justify-center bg-[#e2e2e2]"><Caret /></span>
        </div>
        <div className="mt-3.5 grid grid-cols-[80px_1fr] gap-y-[7px] pl-5">
          <span>A: 801,5</span><span>22</span>
          <span>B: 801,4</span><span>5</span>
        </div>
      </div>
    </aside>
  );
}

const quarterHours = "15:30 15:45 16:00 16:15 16:30 16:45 17:00 17:15 17:30 17:45";
const lateQuarters = quarterHours.slice(6);
const atrMinute = "1687,585 1693,585 1699,582 1705,574 1711,568 1718,567 1724,563 1732,562 1740,561 1747,558 1754,558 1763,560 1773,562 1789,562 1802,561 1815,560 1824,557 1831,558 1839,556 1848,552 1855,553 1859,556 1864,553 1868,553 1872,556 1879,555 1894,557 1903,560 1908,560 1912,557 1923,559 1934,562 1943,567 1951,562 1960,563 1978,568 1993,570 2003,573 2011,568 2015,570 2024,567 2031,568 2044,573 2064,573 2079,574 2084,571 2092,573 2099,575 2116,579 2123,577 2132,576 2136,575 2147,572 2163,573 2176,574 2183,573 2191,576 2200,576 2220,577 2239,581 2247,580 2260,580 2264,578";

function TfWindow() {
  return (
    <section aria-label="TF 03-11 (1 Min)" className="overflow-hidden rounded-t-md border-r border-b border-[#20d0e8] bg-[#b8d0ea] pt-px">
      <TitleBar title="TF 03-11 (1 Min) 18.1.2011" active pad="pl-2.5 pr-[9px]" />
      <div className="mr-1.5 mb-[6px] ml-[7px]">
        <Chart
          origin={[1679, 264]}
          height="h-[368px]"
          label="TF 03-11 one minute chart"
          fixed={<><FixButton place="top-px right-px" /><FixButton place="top-[282px] right-px" /></>}
        >
          <Lines items={[[1699, 268, 1699, 312], [1699, 375, 1699, 534]]} color="#b4b4b4" dash="3 1" />
          <Dotted items={[[1686, 443, 1865, 443], [1866, 457, 1949, 457], [1951, 481, 2018, 481], [2018, 485, 2022, 485], [2024, 501, 2269, 501]]} />
          <Candles bars={tfBars} x={1687} step={4} base={230} />
          <Pivot name="R1" x1={1867} x2={2267} y={274} color={LIME} thick />
          <Pivot name="PP" x1={1867} x2={2267} y={396} color={PIVOT} />
          <Lines items={[[1799, 387, 1823, 417], [1799, 387, 2023, 501], [1867, 458, 1951, 481]]} />
          <Curve points={atrMinute} color={LIME} />
          <Labels items={[[1823, 436, "1"], [1951, 498, "6"], [2123, 477, "9"]]} />
          <Heading x={1682} y={281} until={2278} text="HeikenAshi(TF  03-11  (1  Min)),  Pivots(TF  03-11  (1  Min),Daily,CalcFromIntradayData,0,0,0,100),  BarTimer(TF  03-11  (1  Min))" />
          <Labels items={[[2093, 525, "Time remaining = 00:00:12"], [1682, 562, "ATR(TF 03-11 (1 Min),10)"]]} size={13} anchor="start" />
          <Labels items={[[1682, 598, "© 2011 NinjaTrader, LLC"]]} anchor="start" />
          <Lines items={[[1679, 538, 2341, 538]]} />
          <PriceAxis x={2278} top={268} bottom={600} ticks={[[282, ""], [316, "804,0"], [351, "803,0"], [385, "802,0"], [419, "801,0"], [453, "800,0"], [487, "799,0"], [521, "798,0"], [546, "1"], [594, "0"]]} />
          <PriceTag x={2279} y={265} fill={LIME} text="805,2" />
          <PriceTag x={2279} y={387} fill={PIVOT} text="801.7" />
          <PriceTag x={2279} y={397} fill="#ffffff" text="801,4" />
          <PriceTag x={2279} y={569} width={39} fill={LIME} text="0,33" />
          <TimeAxis x1={1679} x2={2278} y={600} ticks={times(1699, quarterHours)} />
        </Chart>
        <ScrollBar thumb="w-[15px]" grip={false} />
      </div>
    </section>
  );
}

function NqWindow() {
  return (
    <section aria-label="NQ 03-11 (1 Min)" className="ml-[-19px] w-[calc(100%+51px)] border-y border-[#707070] bg-[#d6e3f1]">
      <TitleBar title="NQ 03-11 (1 Min) 18.1.2011" pad="pl-2.5 pr-2" />
      <div className="mx-[7px] mb-[6px]">
        <Chart origin={[2336, 264]} height="h-[368px]" label="NQ 03-11 one minute chart">
          <Dotted items={[[2354, 351, 2748, 351], [2762, 333, 2779, 333], [2783, 328, 2872, 328]]} />
          <Candles bars={nqBars} x={2350} step={4} base={230} />
          <Pivot name="R1" x1={2470} x2={2870} y={382} color={LIME} thick />
          <Pivot name="PP" x1={2470} x2={2870} y={543} color={PIVOT} />
          <Lines items={[[2402, 462, 2626, 439], [2470, 457, 2562, 425]]} />
          <Heading x={2340} y={280} until={2881} text="Pivots(NQ  03-11  (1  Min),Daily,CalcFromIntradayData,0,0,0,100),  BarTimer(NQ  03-11  (1  Min))" />
          <Labels items={[[2696, 590, "Time remaining = 00:00:12"]]} size={13} anchor="start" />
          <Labels items={[[2338, 597, "© 2011 NinjaTrader, LLC"]]} anchor="start" />
          <PriceAxis x={2881} top={267} bottom={599} ticks={[[289, "2325,00"], [341, "2320,00"], [393, "2315,00"], [445, "2310,00"], [498, "2305,00"], [550, "2300,00"]]} />
          <PriceTag x={2882} y={345} width={60} fill="#ffffff" text="2318,75" />
          <PriceTag x={2882} y={373} width={60} fill={LIME} text="2316,00" />
          <PriceTag x={2882} y={534} width={60} fill={PIVOT} text="2300,67" />
          <TimeAxis x1={2336} x2={2881} y={599} ticks={times(2362, lateQuarters)} />
        </Chart>
        <ScrollBar thumb="w-[15px]" grip={false} />
      </div>
    </section>
  );
}

function EsWindow() {
  return (
    <section aria-label="ES 03-11 (1 Min)" className="overflow-hidden border-x-[7px] border-[#d6e3f1]">
      <Chart origin={[1679, 663]} height="h-[308px]" label="ES 03-11 one minute chart">
        <Lines items={[[1703, 665, 1703, 791], [1703, 844, 1703, 940]]} color="#b4b4b4" dash="3 1" />
        <Dotted items={[[1686, 684, 2277, 684], [1686, 912, 2277, 912]]} />
        <Candles bars={esBars} x={1687} step={4} base={640} />
        <Pivot name="R1" x1={1875} x2={2275} y={760} color={LIME} thick />
        <Pivot name="PP" x1={1875} x2={2275} y={864} color={PIVOT} />
        <Lines items={[[1879, 829, 1967, 829], [1807, 864, 2039, 845]]} />
        <Heading x={1682} y={678} until={2286} text="BarTimer(ES  03-11 (1  Min)),  HeikenAshi(ES  03-11 (1  Min)),  Pivots(ES  03-11 (1  Min),Daily,CalcFromIntradayData,0,0,0,100)" />
        <Labels items={[[2101, 931, "Time remaining = 00:00:12"]]} size={13} anchor="start" />
        <Labels items={[[1682, 938, "© 2011 NinjaTrader, LLC"]]} anchor="start" />
        <PriceAxis x={2286} top={665} bottom={940} ticks={[[684, ""], [712, "1292,00"], [739, "1291,00"], [767, "1290,00"], [795, "1289,00"], [823, "1288,00"], [850, "1287,00"], [878, "1286,00"], [906, "1285,00"], [933, "1284,00"]]} />
        <PriceTag x={2287} y={752} width={60} fill={LIME} text="1290,25" />
        <PriceTag x={2287} y={772} width={60} fill="#ffffff" text="1289,50" />
        <PriceTag x={2287} y={855} width={60} fill={PIVOT} text="1286,50" />
        <TimeAxis x1={1679} x2={2286} y={940} ticks={times(1707, quarterHours)} />
      </Chart>
    </section>
  );
}

function YmWindow() {
  return (
    <section aria-label="YM 03-11 (1 Min)" className="overflow-hidden">
      <Chart origin={[2348, 663]} height="h-[308px]" label="YM 03-11 one minute chart">
        <Dotted items={[[2356, 818, 2443, 818], [2444, 800, 2447, 800], [2450, 796, 2482, 796], [2480, 778, 2483, 778], [2494, 735, 2512, 735], [2513, 714, 2754, 714], [2765, 710, 2791, 710], [2794, 703, 2803, 703], [2806, 699, 2846, 699], [2850, 692, 2875, 692]]} />
        <Candles bars={ymBars} x={2357} step={4} base={640} />
        <Pivot name="R2" x1={2473} x2={2873} y={811} color={LIME} thick />
        <Pivot name="R1" x1={2473} x2={2873} y={918} color={LIME} thick />
        <Lines items={[[2405, 893, 2629, 807], [2473, 820, 2565, 793]]} />
        <Heading x={2351} y={678} until={2884} text="CurrentDayOHL(YM  03-11  (1  Min)),  BarTimer(YM  03-11 (1  Min)),  Pivots(YM  03-11  (1  Min),Daily" />
        <Labels items={[[2699, 931, "Time remaining = 00:00:13"]]} size={13} anchor="start" />
        <Labels items={[[2351, 938, "© 2011 NinjaTrader, LLC"]]} anchor="start" />
        <PriceAxis x={2884} top={665} bottom={940} ticks={[[674, ""], [710, "11800"], [746, "11790"], [782, "11780"], [818, "11770"], [854, "11760"], [890, "11750"], [926, "11740"]]} />
        <PriceTag x={2885} y={716} width={60} fill="#ffffff" text="11796" />
        <PriceTag x={2885} y={802} width={60} fill={LIME} text="11772" />
        <PriceTag x={2885} y={909} width={60} fill={LIME} text="11742" />
        <TimeAxis x1={2348} x2={2884} y={940} ticks={times(2365, lateQuarters)} />
      </Chart>
    </section>
  );
}

export default function App() {
  return (
    <main className="flex overflow-hidden bg-black font-['Liberation_Sans',Arial,sans-serif]">
      <div className="relative min-w-0 flex-[1503] overflow-hidden">
        <RangeChart />
        <HourWindow />
        <DailyWindow />
      </div>
      <OrderPanel />
      <div className="grid min-w-0 flex-[1257] grid-cols-[676fr_580fr] content-start overflow-hidden pt-[235px] pl-px">
        <TfWindow />
        <div className="overflow-hidden">
          <NqWindow />
        </div>
        <EsWindow />
        <YmWindow />
      </div>
    </main>
  );
}
